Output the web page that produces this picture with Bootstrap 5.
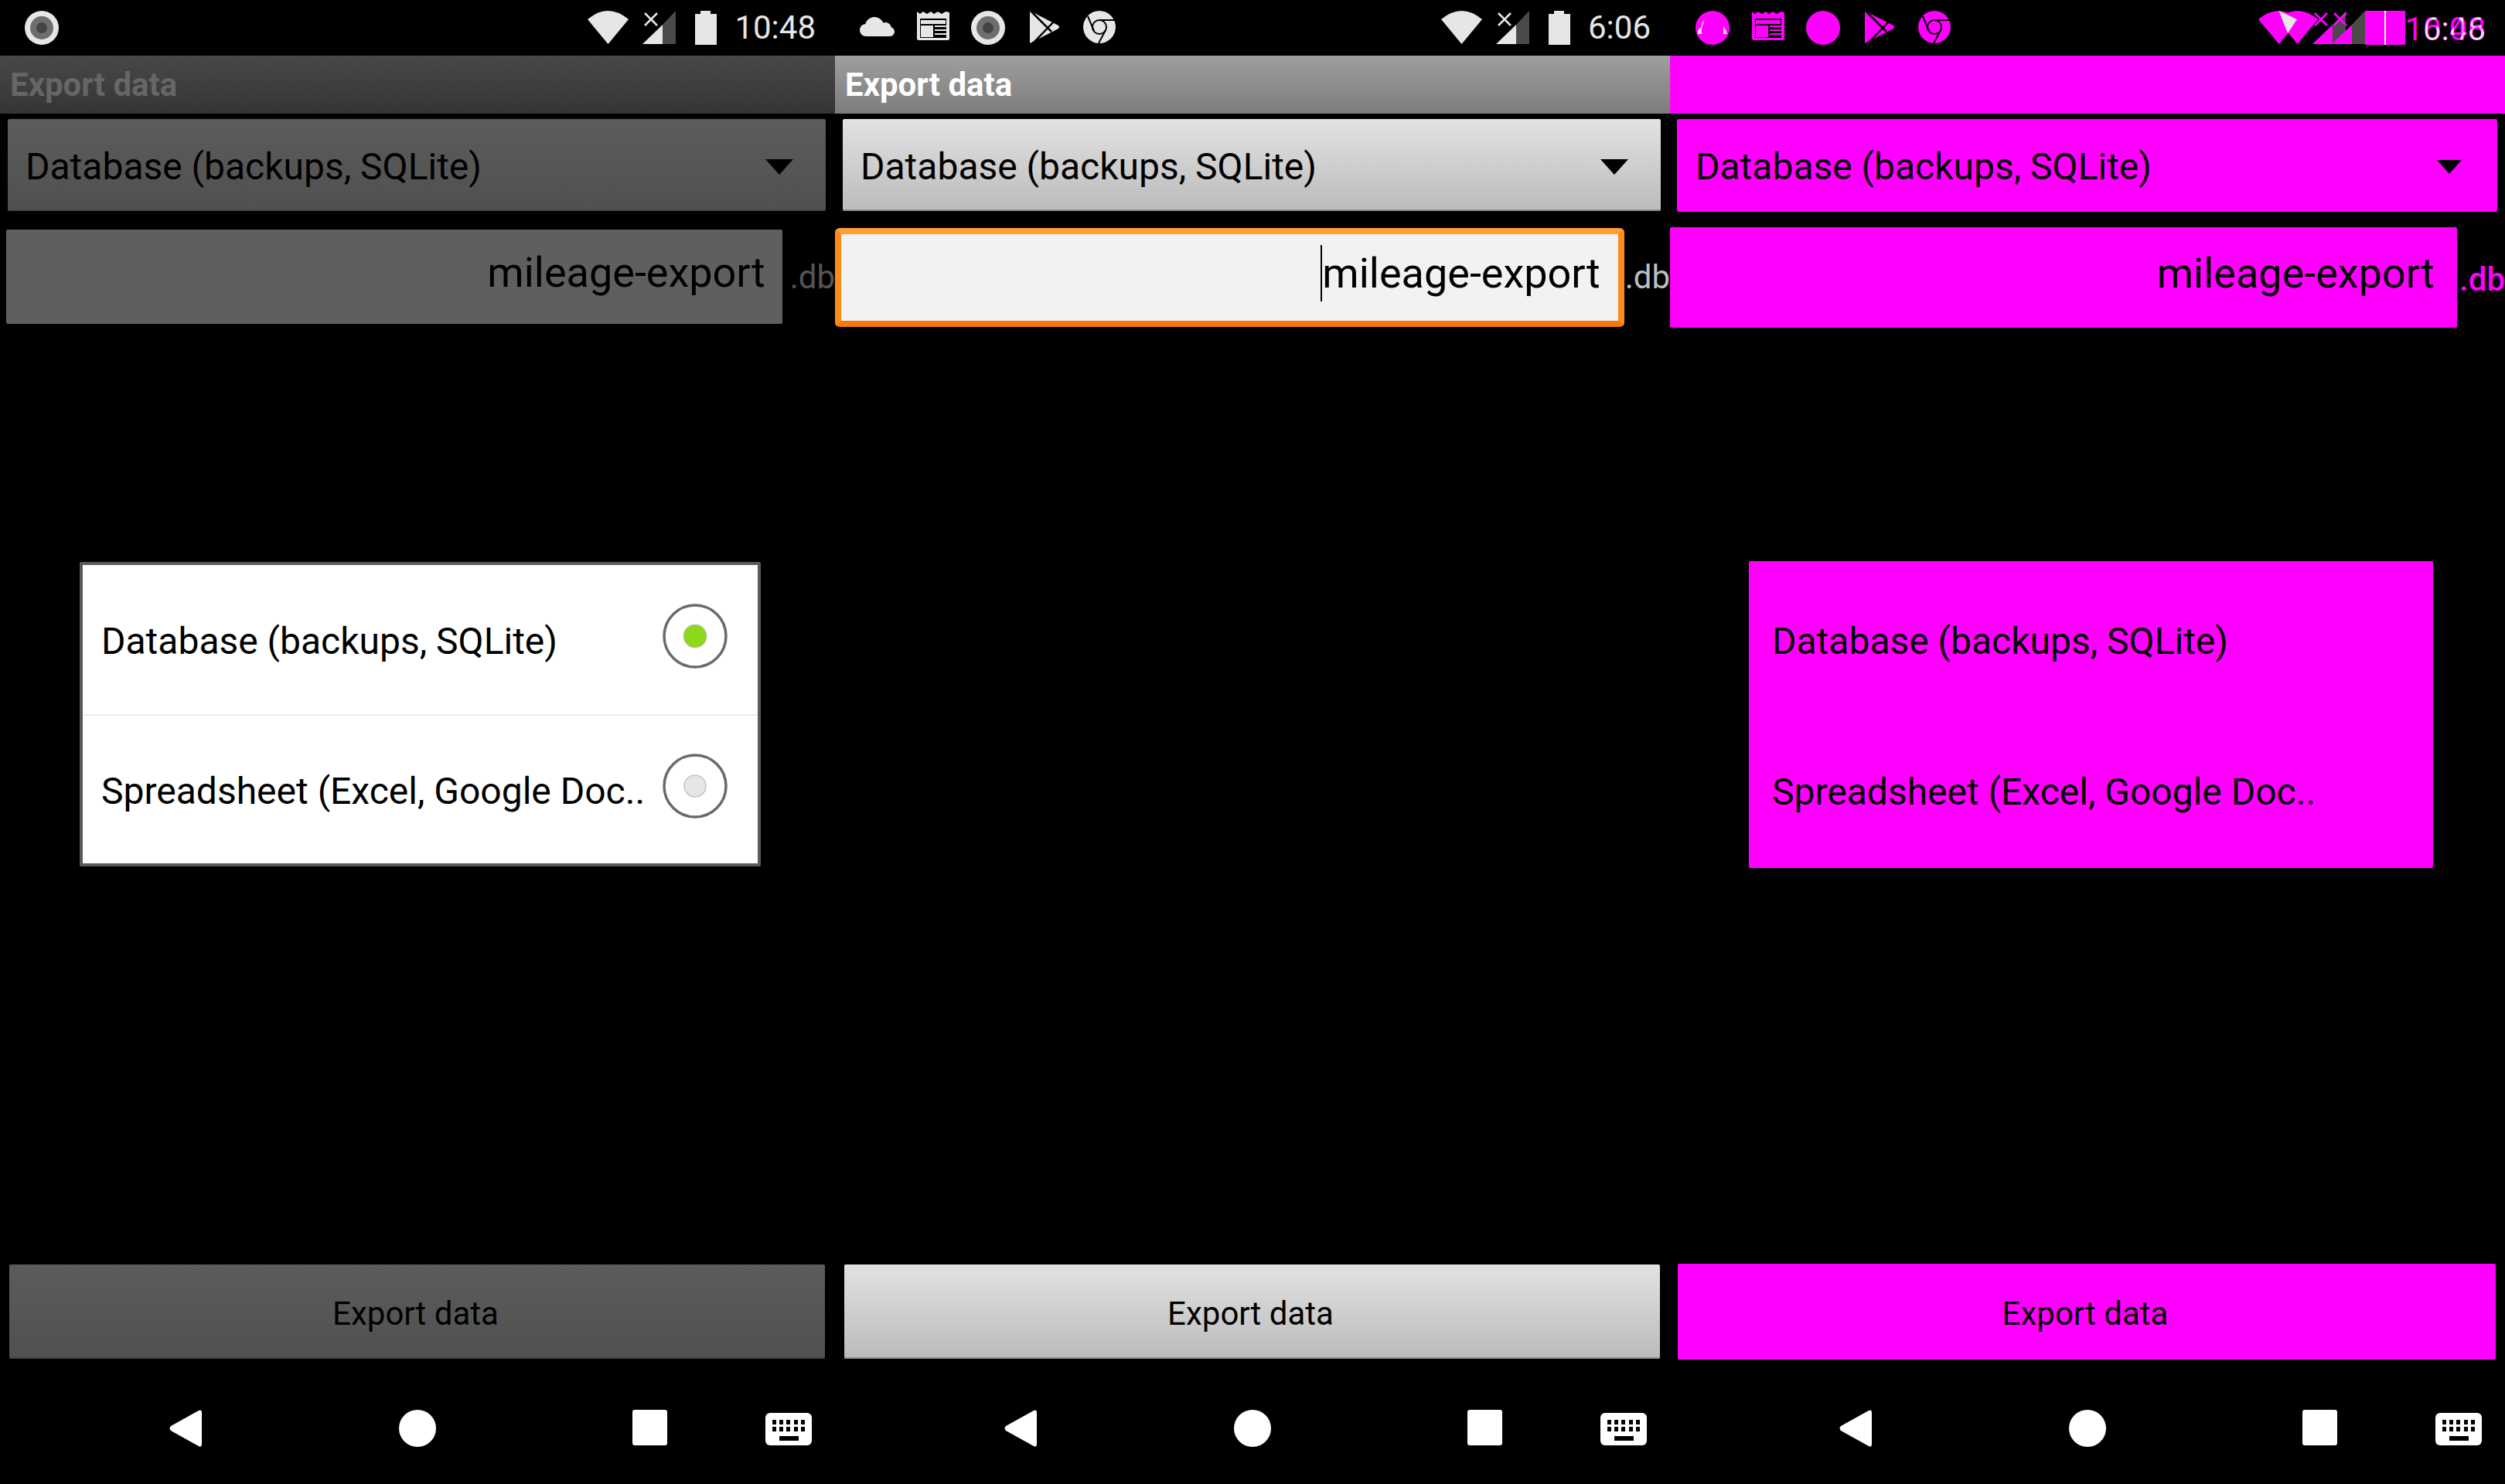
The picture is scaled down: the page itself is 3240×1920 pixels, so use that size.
<!DOCTYPE html>
<html lang="en">

<head>
    <meta charset="UTF-8">
    <meta name="viewport" content="width=device-width, initial-scale=1.0">
    <title>Export data</title>
    <link href="https://cdn.jsdelivr.net/npm/bootstrap@5.3.0/dist/css/bootstrap.min.css" rel="stylesheet">
    <style>
        body {
            background: #000;
            font-family: Roboto, "Liberation Sans", sans-serif;
        }

        .shot {
            width: 3240px;
            height: 1920px;
        }

        .pane {
            width: 1080px;
            height: 1920px;
        }

        /* status bar */
        .status-row {
            height: 72px;
            padding: 14px 25px 0 32px;
            color: #e6e6e6;
        }

        .status-time {
            font-size: 42px;
            line-height: 44px;
            margin-left: 23px;
            color: #e6e6e6;
        }

        .notify-icons {
            gap: 28px;
        }

        .notify-icons svg:nth-child(4) {
            margin-left: 4px;
        }

        .notify-icons svg:nth-child(5) {
            margin-left: 2px;
        }

        .sys-icons svg+svg {
            margin-left: 18px;
        }

        .sys-icons svg+svg+svg {
            margin-left: 25px;
        }

        /* title bar */
        .title-bar {
            height: 75px;
            padding: 0 13px;
            justify-content: flex-start;
        }

        .title-bar .navbar-brand {
            font-size: 42px;
            font-weight: 700;
            padding: 0;
            margin: 0;
            line-height: 1;
        }

        /* spinner */
        .spin-box {
            height: 119px;
            margin: 7px 12px 0 10px;
            padding: 4px 42px 0 23px;
            border: 0;
            border-radius: 2px;
            font-size: 48px;
            color: #000;
        }

        /* file name */
        .name-row {
            margin-top: 24px;
        }

        .name-box {
            width: 1005px;
            height: 122px;
            margin-left: 8px;
            padding: 0 22px 12px 0;
            border: 0;
            border-radius: 2px;
            font-size: 54px;
            color: #000;
        }

        .ext-label {
            margin-left: 10px;
            font-size: 42px;
        }

        /* dialog */
        .choice-dialog {
            width: 881px;
            height: 394px;
            margin: 308px 0 0 103px;
            border: 4px solid #5a5a5a;
            border-radius: 2px;
            background: #fff;
        }

        .choice-dialog .list-group-item {
            height: 194px;
            padding: 4px 0 0 24px;
            border: 0;
            border-radius: 0;
            background: transparent;
            font-size: 48px;
            white-space: nowrap;
            color: #000;
        }

        .choice-dialog .list-group-item+.list-group-item {
            border-top: 2px solid #ececec;
        }

        .choice-dialog .radio-mark {
            flex-shrink: 0;
            margin: 0 39px 14px auto;
        }

        /* export button */
        .export-btn {
            width: 1055px;
            height: 122px;
            margin: auto 0 0 12px;
            padding: 4px 16px 0 12px;
            border: 0;
            border-radius: 2px;
            font-size: 42px;
            color: #000;
        }

        /* nav bar */
        .nav-row {
            height: 48px;
            margin: 66px 0 48px;
            padding-left: 219px;
        }

        .nav-row svg:nth-child(2) {
            margin-left: 255px;
        }

        .nav-row svg:nth-child(3) {
            margin-left: 254px;
        }

        .nav-row svg:nth-child(4) {
            margin-left: 127px;
        }

        /* dimmed screenshot */
        .pane-dim .title-bar {
            background: linear-gradient(#484848, #353535);
        }

        .pane-dim .navbar-brand {
            color: #666;
        }

        .pane-dim .spin-box,
        .pane-dim .export-btn {
            background: linear-gradient(#5c5c5c, #505050);
            box-shadow: inset 0 -2px 0 #444;
        }

        .pane-dim .name-box {
            background: #5f5f5f;
        }

        .pane-dim .ext-label {
            color: #555;
        }

        /* normal screenshot */
        .pane-lit .title-bar {
            background: linear-gradient(#9e9e9e, #7d7d7d);
        }

        .pane-lit .navbar-brand {
            color: #fff;
        }

        .pane-lit .spin-box,
        .pane-lit .export-btn {
            background: linear-gradient(#e2e2e2, #bbb);
            box-shadow: inset 0 -2px 0 #8e8e8e;
        }

        .pane-lit .name-box {
            width: 1021px;
            height: 128px;
            margin-left: 0;
            margin-top: -2px;
            margin-bottom: -4px;
            padding-right: 23px;
            border: 8px solid #fb8c1c;
            border-top-color: #ffa030;
            border-bottom-color: #f27a08;
            border-radius: 6px;
            background: #f2f2f2;
        }

        .pane-lit .ext-label {
            margin-left: 1px;
            color: #bdbdbd;
        }

        .caret-mark {
            border-left: 2px solid #000;
            line-height: 73px;
        }

        /* diff screenshot */
        .pane-diff .status-row svg,
        .pane-diff .status-time {
            color: #f0f;
        }

        .pane-diff .title-bar,
        .pane-diff .spin-box,
        .pane-diff .export-btn,
        .pane-diff .name-box,
        .pane-diff .choice-dialog {
            background: #f0f;
        }

        .pane-diff .spin-box {
            height: 120px;
            margin: 7px 10px 0 9px;
            padding-left: 24px;
            padding-right: 46px;
        }

        .pane-diff .name-box {
            width: 1022px;
            height: 130px;
            margin-left: 0;
            margin-top: -4px;
            padding-right: 29px;
        }

        .pane-diff .ext-label {
            margin-left: 3px;
            color: #f0f;
            font-weight: 500;
        }

        .pane-diff .choice-dialog {
            width: 885px;
            height: 397px;
            margin: 302px 0 0 102px;
            border: 0;
        }

        .pane-diff .choice-dialog .list-group-item {
            height: 186px;
            padding-left: 30px;
        }

        .pane-diff .choice-dialog .list-group-item:first-child {
            height: 204px;
        }

        .pane-diff .choice-dialog .list-group-item+.list-group-item {
            border-top: 0;
        }

        .pane-diff .export-btn {
            width: 1058px;
            height: 124px;
            margin-left: 10px;
        }

        .pane-diff .nav-row {
            margin-top: 65px;
        }
    </style>
</head>

<body>
    <svg width="0" height="0" class="d-block">
        <defs>
            <symbol id="ic-wifi" viewBox="0 0 53 43">
                <path d="M0 11Q26.5-11 53 11L26.5 43Z" fill="currentColor" />
            </symbol>
            <symbol id="ic-signal" viewBox="0 0 43 43">
                <path d="M0 43L26 18V43Z" fill="currentColor" />
                <path d="M26 18L43 0V43H26Z" fill="#4a4a4a" />
                <path d="M3 3L19 19M19 3L3 19" stroke="currentColor" stroke-width="2.5" />
            </symbol>
            <symbol id="ic-batt" viewBox="0 0 28 44">
                <path d="M7 0H20V4H28V44H0V4H7Z" fill="currentColor" />
            </symbol>
            <symbol id="ic-lens" viewBox="0 0 44 44">
                <circle cx="22" cy="22" r="22" fill="currentColor" />
                <circle cx="22" cy="22" r="15" fill="#6e6e6e" />
                <circle cx="22" cy="22" r="7" fill="#444" />
            </symbol>
            <symbol id="ic-cloud" viewBox="0 0 46 25">
                <g fill="currentColor">
                    <circle cx="8" cy="17" r="8" />
                    <circle cx="19" cy="12" r="12" />
                    <circle cx="33" cy="15" r="8" />
                    <circle cx="39" cy="19" r="6" />
                    <rect x="8" y="14" width="31" height="11" />
                </g>
            </symbol>
            <symbol id="ic-news" viewBox="0 0 42 38">
                <path d="M0 1L4 4L8 1L13 4L18 1L22 4L27 1L32 4L37 1L42 2V36Q42 38 40 38H2Q0 38 0 36Z" fill="currentColor" />
                <rect x="4" y="10" width="34" height="25" fill="#000" />
                <g fill="currentColor">
                    <rect x="5" y="12" width="32" height="5" />
                    <rect x="5" y="19" width="16" height="15" />
                    <rect x="23" y="19" width="15" height="2" />
                    <rect x="23" y="24" width="15" height="2" />
                    <rect x="23" y="29" width="15" height="2" />
                </g>
            </symbol>
            <symbol id="ic-play" viewBox="0 0 39 42">
                <path d="M0 0L37 19Q39 21 37 23L0 42Z" fill="currentColor" />
                <path d="M1 0L28 27M4 42L31 14" stroke="#000" stroke-width="2.5" />
            </symbol>
            <symbol id="ic-chrome" viewBox="0 0 42 42">
                <circle cx="21" cy="21" r="21" fill="currentColor" />
                <circle cx="21" cy="21" r="9" fill="none" stroke="#000" stroke-width="2" />
                <path d="M21 12H41M6 7L14 26M29 25L20 42" stroke="#000" stroke-width="2" fill="none" />
            </symbol>
            <symbol id="nav-back" viewBox="0 0 42 48">
                <path d="M38 1Q42-1 42 4V44Q42 49 38 47L2 27Q-1 24 2 21Z" fill="#fff" />
            </symbol>
            <symbol id="nav-keys" viewBox="0 0 60 42">
                <rect width="60" height="42" rx="6" fill="#fff" />
                <g fill="#000">
                    <rect x="9" y="9" width="5" height="6" />
                    <rect x="18" y="9" width="5" height="6" />
                    <rect x="27" y="9" width="5" height="6" />
                    <rect x="37" y="9" width="5" height="6" />
                    <rect x="46" y="9" width="5" height="6" />
                    <rect x="9" y="18" width="5" height="6" />
                    <rect x="18" y="18" width="5" height="6" />
                    <rect x="27" y="18" width="5" height="6" />
                    <rect x="37" y="18" width="5" height="6" />
                    <rect x="46" y="18" width="5" height="6" />
                    <rect x="18" y="30" width="25" height="6" />
                </g>
            </symbol>
        </defs>
    </svg>

    <div class="shot d-flex">
        <!-- dimmed, dialog open -->
        <div class="pane pane-dim d-flex flex-column">
            <div class="status-row d-flex align-items-start">
                <svg width="44" height="44"><use href="#ic-lens" /></svg>
                <div class="sys-icons d-flex align-items-start ms-auto">
                    <svg width="53" height="43"><use href="#ic-wifi" /></svg>
                    <svg width="43" height="43"><use href="#ic-signal" /></svg>
                    <svg width="28" height="44"><use href="#ic-batt" /></svg>
                    <span class="status-time">10:48</span>
                </div>
            </div>
            <div class="navbar title-bar"><span class="navbar-brand">Export data</span></div>
            <button class="btn spin-box d-flex justify-content-between align-items-center">
                <span>Database (backups, SQLite)</span>
                <svg width="36" height="20"><path d="M0 0H36L18 20Z" /></svg>
            </button>
            <div class="name-row d-flex align-items-center">
                <div class="form-control name-box d-flex justify-content-end align-items-center"><span>mileage-export</span></div>
                <span class="ext-label">.db</span>
            </div>
            <div class="list-group choice-dialog">
                <div class="list-group-item d-flex align-items-center">
                    <span>Database (backups, SQLite)</span>
                    <svg class="radio-mark" width="84" height="84">
                        <circle cx="42" cy="42" r="40" fill="#fff" stroke="#6a6a6a" stroke-width="3.5" />
                        <circle cx="42" cy="42" r="15" fill="#8ed81c" stroke="#bbb" stroke-width="1" />
                    </svg>
                </div>
                <div class="list-group-item d-flex align-items-center">
                    <span>Spreadsheet (Excel, Google Doc..</span>
                    <svg class="radio-mark" width="84" height="84">
                        <circle cx="42" cy="42" r="40" fill="#fff" stroke="#6a6a6a" stroke-width="3.5" />
                        <circle cx="42" cy="42" r="14" fill="#e6e6e6" stroke="#c4c4c4" stroke-width="1.5" />
                    </svg>
                </div>
            </div>
            <button class="btn export-btn">Export data</button>
            <div class="nav-row d-flex align-items-start">
                <svg width="42" height="48"><use href="#nav-back" /></svg>
                <svg width="48" height="48"><circle cx="24" cy="24" r="24" fill="#fff" /></svg>
                <svg width="45" height="46"><rect width="45" height="46" rx="3" fill="#fff" /></svg>
                <svg width="60" height="42" class="mt-1"><use href="#nav-keys" /></svg>
            </div>
        </div>

        <!-- normal, field focused -->
        <div class="pane pane-lit d-flex flex-column">
            <div class="status-row d-flex align-items-start">
                <div class="notify-icons d-flex align-items-start">
                    <svg width="46" height="25" class="mt-2"><use href="#ic-cloud" /></svg>
                    <svg width="42" height="38"><use href="#ic-news" /></svg>
                    <svg width="44" height="44"><use href="#ic-lens" /></svg>
                    <svg width="39" height="42"><use href="#ic-play" /></svg>
                    <svg width="42" height="42"><use href="#ic-chrome" /></svg>
                </div>
                <div class="sys-icons d-flex align-items-start ms-auto">
                    <svg width="53" height="43"><use href="#ic-wifi" /></svg>
                    <svg width="43" height="43"><use href="#ic-signal" /></svg>
                    <svg width="28" height="44"><use href="#ic-batt" /></svg>
                    <span class="status-time">6:06</span>
                </div>
            </div>
            <div class="navbar title-bar"><span class="navbar-brand">Export data</span></div>
            <button class="btn spin-box d-flex justify-content-between align-items-center">
                <span>Database (backups, SQLite)</span>
                <svg width="36" height="20"><path d="M0 0H36L18 20Z" /></svg>
            </button>
            <div class="name-row d-flex align-items-center">
                <div class="form-control name-box d-flex justify-content-end align-items-center"><span class="caret-mark">mileage-export</span></div>
                <span class="ext-label">.db</span>
            </div>
            <button class="btn export-btn">Export data</button>
            <div class="nav-row d-flex align-items-start">
                <svg width="42" height="48"><use href="#nav-back" /></svg>
                <svg width="48" height="48"><circle cx="24" cy="24" r="24" fill="#fff" /></svg>
                <svg width="45" height="46"><rect width="45" height="46" rx="3" fill="#fff" /></svg>
                <svg width="60" height="42" class="mt-1"><use href="#nav-keys" /></svg>
            </div>
        </div>

        <!-- difference of the two -->
        <div class="pane pane-diff d-flex flex-column">
            <div class="status-row d-flex align-items-start">
                <div class="notify-icons d-flex align-items-start">
                    <svg width="46" height="44">
                        <ellipse cx="23" cy="22" rx="22" ry="22" fill="currentColor" />
                        <path d="M4 30Q3 24 8 22Q9 14 13 12Q8 20 9 30ZM37 20Q41 25 42 30H37Z" fill="#e6e6e6" />
                    </svg>
                    <svg width="42" height="38"><use href="#ic-news" /></svg>
                    <svg width="44" height="44"><circle cx="22" cy="22" r="22" fill="currentColor" /></svg>
                    <svg width="39" height="42"><use href="#ic-play" /></svg>
                    <svg width="42" height="42"><use href="#ic-chrome" /></svg>
                </div>
                <svg class="ms-auto" width="294" height="48" viewBox="0 0 294 48">
                    <defs>
                        <clipPath id="time-overlap">
                            <text x="294" y="38" text-anchor="end" font-family="Roboto" font-size="42">10:48</text>
                        </clipPath>
                    </defs>
                    <use href="#ic-wifi" x="0" width="53" height="43" />
                    <use href="#ic-wifi" x="24" width="53" height="43" />
                    <path d="M26.5 0L50 11L38 29Z" fill="#e6e6e6" />
                    <use href="#ic-signal" x="70" width="43" height="43" color="#f0f" />
                    <use href="#ic-signal" x="95" width="43" height="43" color="#f0f" />
                    <rect x="138" width="52" height="44" y="0" fill="#f0f" />
                    <rect x="163" width="2" height="44" y="0" fill="#fff" />
                    <text x="294" y="38" text-anchor="end" font-family="Roboto" font-size="42" fill="#f0f">10:48</text>
                    <text x="294" y="38" text-anchor="end" font-family="Roboto" font-size="42" fill="#f0f">6:06</text>
                    <text x="294" y="38" text-anchor="end" font-family="Roboto" font-size="42" fill="#e6e6e6" clip-path="url(#time-overlap)">6:06</text>
                </svg>
            </div>
            <div class="navbar title-bar"></div>
            <button class="btn spin-box d-flex justify-content-between align-items-center">
                <span>Database (backups, SQLite)</span>
                <svg width="32" height="18"><path d="M0 0H32L16 18Z" /></svg>
            </button>
            <div class="name-row d-flex align-items-center">
                <div class="form-control name-box d-flex justify-content-end align-items-center"><span>mileage-export</span></div>
                <span class="ext-label">.db</span>
            </div>
            <div class="list-group choice-dialog">
                <div class="list-group-item d-flex align-items-center"><span>Database (backups, SQLite)</span></div>
                <div class="list-group-item d-flex align-items-center"><span>Spreadsheet (Excel, Google Doc..</span></div>
            </div>
            <button class="btn export-btn">Export data</button>
            <div class="nav-row d-flex align-items-start">
                <svg width="42" height="48"><use href="#nav-back" /></svg>
                <svg width="48" height="48"><circle cx="24" cy="24" r="24" fill="#fff" /></svg>
                <svg width="45" height="46"><rect width="45" height="46" rx="3" fill="#fff" /></svg>
                <svg width="60" height="42" class="mt-1"><use href="#nav-keys" /></svg>
            </div>
        </div>
    </div>

    <script src="https://cdn.jsdelivr.net/npm/bootstrap@5.3.0/dist/js/bootstrap.bundle.min.js"></script>
</body>

</html>
